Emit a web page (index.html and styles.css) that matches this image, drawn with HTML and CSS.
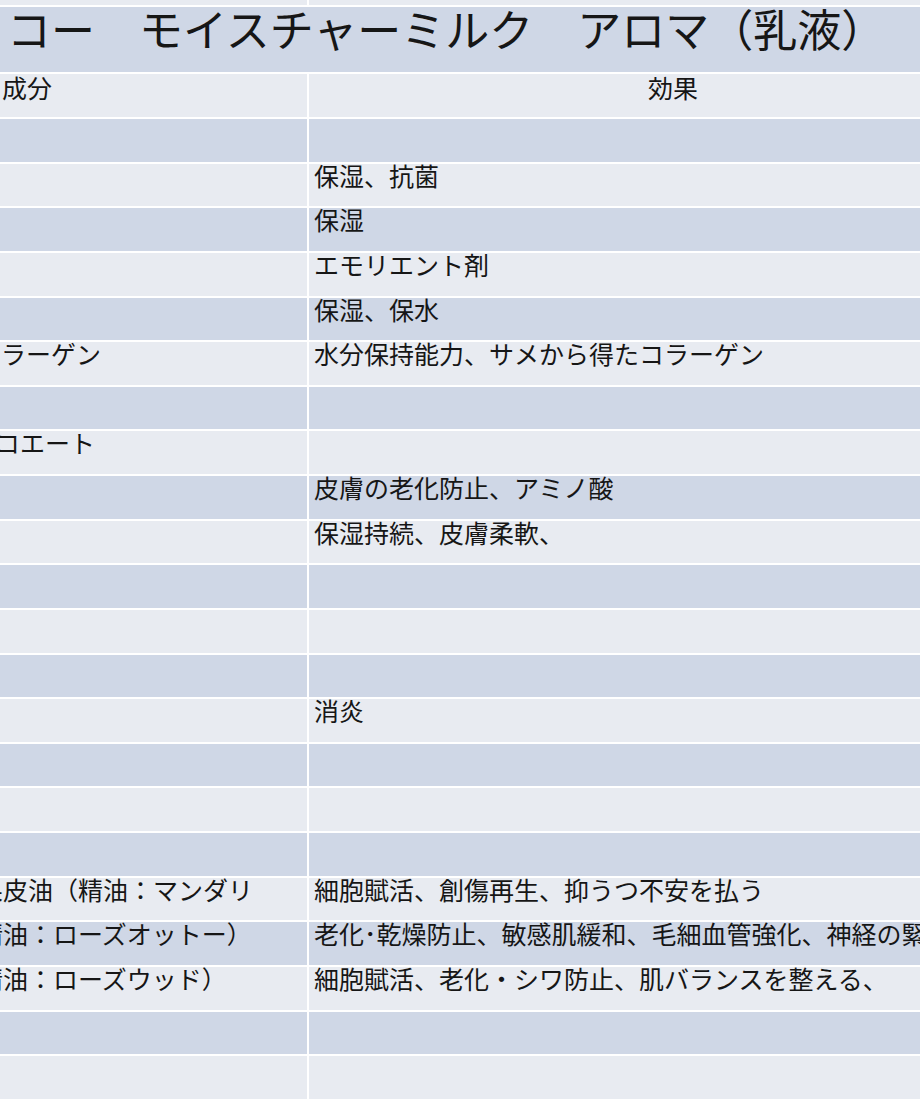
FILE: index.html
```html
<!DOCTYPE html>
<html lang="ja">
<head>
<meta charset="utf-8">
<title>モイスチャーミルク アロマ（乳液）成分表</title>
<link rel="stylesheet" href="styles.css">
</head>
<body>
<div class="sheet">
  <div class="cell light strip"></div><div class="cell light strip"></div>
  <div class="cell dark title">コー　モイスチャーミルク　アロマ（乳液）</div>
  <div class="cell light head-left">成分</div><div class="cell light head-right">効果</div>

  <div class="cell dark"></div><div class="cell dark"></div>
  <div class="cell light"></div><div class="cell light r">保湿、抗菌</div>
  <div class="cell dark"></div><div class="cell dark r">保湿</div>
  <div class="cell light"></div><div class="cell light r">エモリエント剤</div>
  <div class="cell dark"></div><div class="cell dark r">保湿、保水</div>
  <div class="cell light l">ラーゲン</div><div class="cell light r">水分保持能力、サメから得たコラーゲン</div>
  <div class="cell dark"></div><div class="cell dark"></div>
  <div class="cell light l"><span class="shift-s">コエート</span></div><div class="cell light"></div>
  <div class="cell dark"></div><div class="cell dark r">皮膚の老化防止、アミノ酸</div>
  <div class="cell light"></div><div class="cell light r">保湿持続、皮膚柔軟、</div>
  <div class="cell dark"></div><div class="cell dark"></div>
  <div class="cell light"></div><div class="cell light"></div>
  <div class="cell dark"></div><div class="cell dark"></div>
  <div class="cell light"></div><div class="cell light r">消炎</div>
  <div class="cell dark"></div><div class="cell dark"></div>
  <div class="cell light"></div><div class="cell light"></div>
  <div class="cell dark"></div><div class="cell dark"></div>
  <div class="cell light l"><span class="shift">果皮油（精油：マンダリ</span></div><div class="cell light r">細胞賦活、創傷再生、抑うつ不安を払う</div>
  <div class="cell dark l"><span class="shift">精油：ローズオットー）</span></div><div class="cell dark r wide">老化･乾燥防止、敏感肌緩和、毛細血管強化、神経の緊</div>
  <div class="cell light l"><span class="shift">精油：ローズウッド）</span></div><div class="cell light r">細胞賦活、老化・シワ防止、肌バランスを整える、</div>
  <div class="cell dark"></div><div class="cell dark"></div>
  <div class="cell light"></div><div class="cell light"></div>
</div>
</body>
</html>
```
FILE: styles.css
```css
html, body {
  margin: 0;
  padding: 0;
  background: #ffffff;
  overflow: hidden;
}

body {
  font-family: "Noto Sans CJK JP", "Noto Sans", sans-serif;
  color: #161616;
}

.sheet {
  display: grid;
  width: 920px;
  grid-template-columns: 307px 611px;
  grid-template-rows: 5px 65px 43px repeat(22, 42.64px);
  gap: 2px;
}

.cell {
  white-space: nowrap;
  font-size: 25px;
  line-height: 22px;
  min-width: 0;
}

.light { background: #e8ebf1; }
.dark { background: #cfd7e6; }

.title {
  grid-column: 1 / span 2;
  font-size: 44px;
  line-height: 42px;
  padding-left: 7px;
}

.head-left {
  padding: 2px 0 0 2px;
}

.head-right {
  padding: 2px 0 0 339px;
}

.r { padding-left: 5px; }
.l { padding-left: 1px; overflow-x: clip; overflow-y: visible; }

.shift { display: inline-block; margin-left: -23px; }
.shift-s { display: inline-block; margin-left: -6px; }
```
